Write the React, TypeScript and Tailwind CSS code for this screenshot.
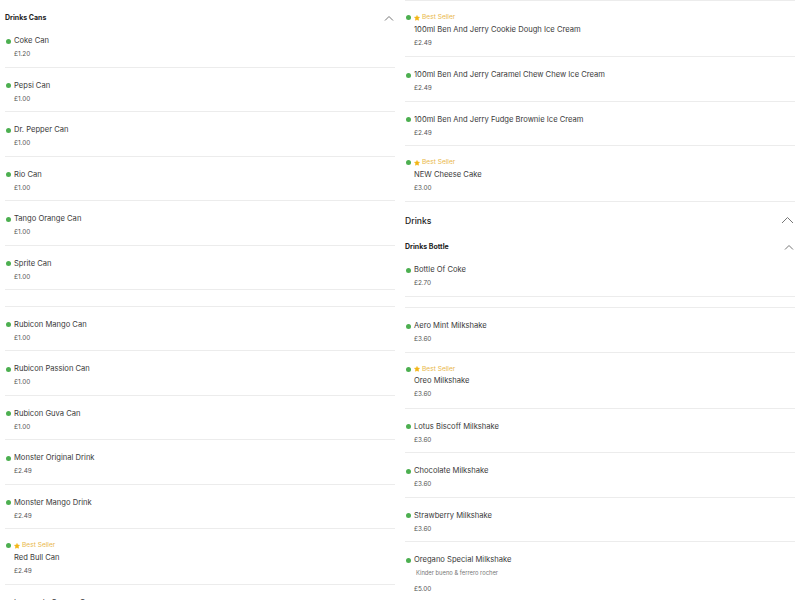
import { Star } from "lucide-react";

type Item = {
  name: string;
  price: string;
  best?: boolean;
  desc?: string;
};

const LEFT_TOP: Item[] = [
  { name: "Coke Can", price: "£1.20" },
  { name: "Pepsi Can", price: "£1.00" },
  { name: "Dr. Pepper Can", price: "£1.00" },
  { name: "Rio Can", price: "£1.00" },
  { name: "Tango Orange Can", price: "£1.00" },
  { name: "Sprite Can", price: "£1.00" },
];

const LEFT_BOTTOM: Item[] = [
  { name: "Rubicon Mango Can", price: "£1.00" },
  { name: "Rubicon Passion Can", price: "£1.00" },
  { name: "Rubicon Guva Can", price: "£1.00" },
  { name: "Monster Original Drink", price: "£2.49" },
  { name: "Monster Mango Drink", price: "£2.49" },
  { name: "Red Bull Can", price: "£2.49", best: true },
  { name: "Lucozade Orange Can", price: "£1.00" },
];

const DESSERTS: Item[] = [
  { name: "100ml Ben And Jerry Cookie Dough Ice Cream", price: "£2.49", best: true },
  { name: "100ml Ben And Jerry Caramel Chew Chew Ice Cream", price: "£2.49" },
  { name: "100ml Ben And Jerry Fudge Brownie Ice Cream", price: "£2.49" },
  { name: "NEW Cheese Cake", price: "£3.00", best: true },
];

const SHAKES: Item[] = [
  { name: "Aero Mint Milkshake", price: "£3.60" },
  { name: "Oreo Milkshake", price: "£3.60", best: true },
  { name: "Lotus Biscoff Milkshake", price: "£3.60" },
  { name: "Chocolate Milkshake", price: "£3.60" },
  { name: "Strawberry Milkshake", price: "£3.60" },
  {
    name: "Oregano Special Milkshake",
    price: "£5.00",
    desc: "Kinder bueno & ferrero rocher",
  },
];

function Chevron({ big }: { big?: boolean }) {
  return big ? (
    <svg width="13" height="8" viewBox="0 0 13 8" className="mr-[1px]">
      <polyline points="1,7 6.5,1.5 12,7" fill="none" stroke="#777" strokeWidth="1" />
    </svg>
  ) : (
    <svg width="10" height="6" viewBox="0 0 10 6" className="mr-[1px]">
      <polyline points="1,5.5 5,1.5 9,5.5" fill="none" stroke="#777" strokeWidth="1" />
    </svg>
  );
}

function Dot() {
  return <span className="h-[5px] w-[5px] shrink-0 rounded-full bg-[#4caf50]" />;
}

function Row({ item }: { item: Item }) {
  if (item.best) {
    return (
      <div className="h-[56px] border-b border-[#ececec] pt-[12px]">
        <div className="flex h-[9px] items-center pl-[1px]">
          <Dot />
          <Star className="ml-[3px] h-[6px] w-[6px] fill-[#f2b516] text-[#f2b516]" />
          <span className="ml-[2px] text-[6.6px] leading-[9px] text-[#e9b84a]">Best Seller</span>
        </div>
        <div className="mt-[1.5px] pl-[9px] text-[7.6px] leading-[12px] text-[#3a3a3a]">{item.name}</div>
        <div className="mt-[2px] pl-[9px] text-[6.4px] leading-[10px] text-[#555]">{item.price}</div>
      </div>
    );
  }
  return (
    <div className={`${item.desc ? "h-[62px]" : "h-[44.5px]"} border-b border-[#ececec] pt-[12px]`}>
      <div className="flex h-[12px] items-center pl-[1px]">
        <Dot />
        <span className="ml-[3px] text-[7.6px] leading-[12px] text-[#3a3a3a]">{item.name}</span>
      </div>
      {item.desc && (
        <div className="mt-[3px] pl-[11px] text-[5.8px] leading-[8px] text-[#777]">{item.desc}</div>
      )}
      <div
        className={`${item.desc ? "mt-[7px]" : "mt-[2px]"} pl-[9px] text-[6.4px] leading-[10px] text-[#555]`}
      >
        {item.price}
      </div>
    </div>
  );
}

function SubHeader({ title }: { title: string }) {
  return (
    <div className="flex items-center justify-between">
      <span className="text-[7px] font-bold leading-[12px] text-[#222]">{title}</span>
      <Chevron />
    </div>
  );
}

export default function App() {
  return (
    <div
      className="flex h-[600px] w-[800px] gap-[10px] overflow-hidden bg-white px-[5px]"
      style={{ fontFamily: "Inter, 'Liberation Sans', sans-serif" }}
    >
      <div className="w-[390px]">
        <div className="h-[23px] pt-[12px]">
          <SubHeader title="Drinks Cans" />
        </div>
        {LEFT_TOP.map((it) => (
          <Row key={it.name} item={it} />
        ))}
        <div className="h-[16.5px] border-b border-[#ececec]" />
        {LEFT_BOTTOM.map((it) => (
          <Row key={it.name} item={it} />
        ))}
      </div>

      <div className="w-[390px] border-t border-[#ececec]">
        {DESSERTS.map((it) => (
          <Row key={it.name} item={it} />
        ))}
        <div className="flex h-[32px] items-start justify-between pt-[13px]">
          <span className="text-[8.6px] font-medium leading-[12px] text-[#222]">Drinks</span>
          <div className="pt-[1px]">
            <Chevron big />
          </div>
        </div>
        <div className="h-[18px] pt-[7px]">
          <SubHeader title="Drinks Bottle" />
        </div>
        <Row item={{ name: "Bottle Of Coke", price: "£2.70" }} />
        <div className="h-[11.5px] border-b border-[#ececec]" />
        {SHAKES.map((it) => (
          <Row key={it.name} item={it} />
        ))}
      </div>
    </div>
  );
}
